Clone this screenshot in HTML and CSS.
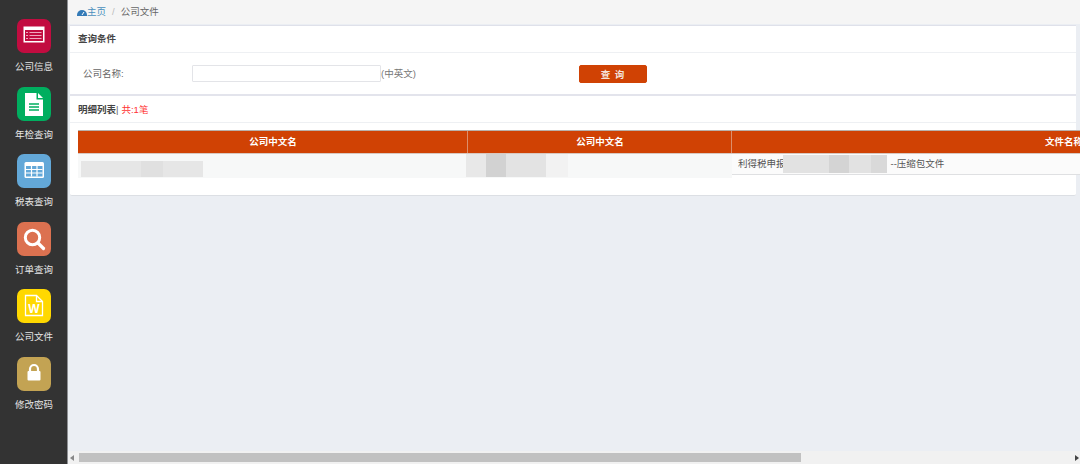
FILE: index.html
```html
<!DOCTYPE html>
<html lang="zh">
<head>
<meta charset="utf-8">
<title>公司文件</title>
<link rel="stylesheet" href="styles.css">
</head>
<body>
<div class="app">
  <nav class="side">
    <a class="nav-item"><span class="ico red"><svg viewBox="0 0 34 34" width="34" height="34"><rect x="6.500" y="7.500" width="21" height="16" fill="#fff"/><rect x="8" y="11" width="18" height="11" fill="#c20c40"/><path d="M12.500 13.500h12M12.500 16.500h12M12.500 19.500h12M9 13.500h2M9 16.500h2M9 19.500h2" stroke="#f0a8bd" stroke-width="1"/></svg></span><span class="lbl">公司信息</span></a>
    <a class="nav-item"><span class="ico green"><svg viewBox="0 0 34 34" width="34" height="34"><path d="M8 6h11.500v6.500H26V29H8z" fill="#fff"/><path d="M21 6l5 5h-5z" fill="#fff"/><path d="M12 17h10M12 20h10M12 23h10" stroke="#00ae5f" stroke-width="1.600"/></svg></span><span class="lbl">年检查询</span></a>
    <a class="nav-item"><span class="ico blue"><svg viewBox="0 0 34 34" width="34" height="34"><rect x="7.500" y="8" width="19.500" height="16" rx="1.500" fill="#fff"/><path d="M9 12h16.500v10.500H9z" fill="#63a8d8"/><path d="M9 15.500h16.500M9 19h16.500M14.500 12v10.500M20 12v10.500" stroke="#fff" stroke-width="1.200"/></svg></span><span class="lbl">税表查询</span></a>
    <a class="nav-item"><span class="ico orange"><svg viewBox="0 0 34 34" width="34" height="34"><circle cx="15.500" cy="15.500" r="7.200" fill="none" stroke="#fff" stroke-width="3"/><path d="M21 21l5.500 5.500" stroke="#fff" stroke-width="3.200" stroke-linecap="round"/></svg></span><span class="lbl">订单查询</span></a>
    <a class="nav-item"><span class="ico yellow"><svg viewBox="0 0 34 34" width="34" height="34"><path d="M8.500 6.500h11l6 6v14h-17z" fill="none" stroke="#fff" stroke-width="1.300"/><path d="M19.500 6.500v6h6" fill="none" stroke="#fff" stroke-width="1.300"/><text x="17" y="24" class="w">W</text></svg></span><span class="lbl">公司文件</span></a>
    <a class="nav-item"><span class="ico tan"><svg viewBox="0 0 34 34" width="34" height="34"><path d="M13 15v-3a4 4 0 0 1 8 0v3" fill="none" stroke="#fff" stroke-width="2.200"/><rect x="10.500" y="14" width="13" height="9.500" rx="1" fill="#fff"/></svg></span><span class="lbl">修改密码</span></a>
  </nav>
  <div class="main">
    <div class="crumb"><svg class="home" viewBox="0 0 10 8" width="10" height="8"><path d="M0 7a5 5 0 0 1 10 0v1H0z" fill="#337ab7"/><path d="M5 7l2-3" stroke="#fff" stroke-width="1"/></svg><a class="crumb-link">主页</a><span class="crumb-sep">/</span><span>公司文件</span></div>
    <section class="panel">
      <div class="panel-head"><b>查询条件</b></div>
      <form class="query">
        <label class="q-label">公司名称:</label>
        <input class="q-input" type="text">
        <span class="q-hint">(中英文)</span>
        <button class="q-btn" type="button">查 询</button>
      </form>
      <div class="panel-head second"><b>明细列表</b><span class="bar">|</span><span class="count">共:1笔</span></div>
      <div class="table-wrap">
        <div class="thead">
          <div class="th c1">公司中文名</div>
          <div class="th c2">公司中文名</div>
          <div class="th c3"><span>文件名称</span></div>
        </div>
        <div class="tbody">
          <div class="td c1"><span class="mosaic m1"></span></div>
          <div class="td c2"><span class="mosaic m2"></span></div>
          <div class="td c3"><span>利得税申报</span><span class="mosaic m3"></span><span class="suffix">--压缩包文件</span></div>
        </div>
      </div>
    </section>
    <div class="hscroll"><i class="arr left"></i><div class="track"><div class="thumb"></div></div><i class="arr right"></i></div>
  </div>
</div>
</body>
</html>
```
FILE: styles.css
```css
* { box-sizing: border-box; }
html, body { margin: 0; height: 100%; overflow: hidden; }
body { font: 10px/14px "Liberation Sans", "Noto Sans CJK SC", sans-serif; color: #555; }
.app { display: flex; width: 1080px; height: 464px; }
.side { width: 68px; flex: none; background: #333; border-right: 1px solid #8e9094; padding: 19px 0 0 1px; display: flex; flex-direction: column; align-items: center; }
.nav-item { display: flex; flex-direction: column; align-items: center; height: 67.500px; }
.ico { width: 34px; height: 34px; border-radius: 7px; display: block; }
.ico svg { display: block; }
.red { background: #c20c40; }
.green { background: #00ae5f; }
.blue { background: #63a8d8; }
.orange { background: #dc7150; }
.yellow { background: #ffd800; }
.tan { background: #c3a353; }
.w { font: bold 12px "Liberation Sans", sans-serif; fill: #fff; text-anchor: middle; }
.lbl { margin-top: 8px; color: #e6e6e6; font-size: 9.500px; line-height: 12px; white-space: nowrap; }
.main { flex: 1; min-width: 0; background: #ebeef3; display: flex; flex-direction: column; position: relative; overflow: hidden; }
.crumb { height: 24px; background: #f5f5f5; padding-left: 9px; display: flex; align-items: center; color: #666; font-size: 9.500px; }
.crumb-link { color: #4a90bd; }
.crumb-sep { margin: 0 6px; color: #bbb; }
.panel { margin: 1px 4px 0 2px; height: 171px; background: #fff; border-top: 1px solid #dfe1ea; border-bottom: 1px solid #dcdfe4; border-radius: 0 0 2px 2px; }
.panel-head { height: 27px; padding-left: 8px; display: flex; align-items: center; border-bottom: 1px solid #eef0f3; color: #444; font-size: 9.500px; }
.panel-head b { font-weight: bold; }
.panel-head.second { height: 29px; border-top: 2px solid #e3e4ec; padding-top: 1px; }
.bar { color: #666; }
.count { color: #f33; margin-left: 3px; }
.query { height: 41px; display: flex; align-items: center; padding-left: 13px; }
.q-label { width: 109px; color: #666; font-size: 9.500px; padding-top: 1px; }
.q-input { width: 189px; height: 17px; border: 1px solid #e3e4e8; background: #fff; padding: 0; margin: 0; border-radius: 1px; }
.q-hint { color: #777; font-size: 9.500px; width: 198px; padding-top: 1px; }
.q-btn { width: 68px; height: 18px; padding: 0; background: #d04204; color: #f4e4dc; border: 1px solid #d04204; border-radius: 2px; font: bold 9.500px "Liberation Sans", "Noto Sans CJK SC", sans-serif; letter-spacing: 1px; }
.table-wrap { margin: 7px 0 0 8px; width: 1060px; }
.thead { display: flex; height: 24px; background: #d04204; border-top: 1px solid #b9b1ab; border-bottom: 1px solid #d8c8c0; }
.th { color: #fff; font-weight: bold; font-size: 9.500px; line-height: 22px; text-align: center; border-right: 1px solid #dc8e6b; padding-left: 1px; }
.th.c3 { border-right: 0; text-align: left; padding-left: 313px; }
.c1 { width: 390px; flex: none; }
.c2 { width: 264px; flex: none; }
.c3 { flex: 1; }
.tbody { display: flex; height: 24px; }
.td { background: #f7f8f8; position: relative; }
.td.c3 { height: 21px; border-bottom: 1px solid #dfe0e2; background: #fbfbfb; padding-left: 6px; display: flex; align-items: center; color: #555; font-size: 9.500px; }
.mosaic { display: block; filter: blur(0.500px); }
.m1 { position: absolute; left: 3px; top: 7px; width: 122px; height: 16px; background: linear-gradient(90deg, #e6e6e6 0 60px, #e0e0e0 60px 82px, #e6e6e6 82px); }
.m2 { position: absolute; left: -2px; top: 0; width: 102px; height: 23px; background: linear-gradient(90deg, #e8e8e8 0 20px, #d2d2d2 20px 40px, #e3e3e3 40px 80px, #f2f2f2 80px); }
.m3 { width: 104px; height: 18px; margin-left: -3px; background: linear-gradient(90deg, #e2e2e2 0 46px, #d4d4d4 46px 66px, #e2e2e2 66px 88px, #d9d9d9 88px); }
.suffix { margin-left: 4px; }
.hscroll { position: absolute; left: 0; right: 0; bottom: 0; height: 13px; background: #f1f1f1; display: flex; align-items: center; }
.track { flex: 1; height: 9px; padding-left: 1px; }
.thumb { width: 722px; height: 9px; background: #c1c1c1; }
.arr { width: 0; height: 0; flex: none; border: 3px solid transparent; }
.arr.left { border-right: 4px solid #888; border-left: 0; margin: 0 4px 0 2px; }
.arr.right { border-left: 4px solid #444; border-right: 0; margin: 0 1px 0 7px; }
```
